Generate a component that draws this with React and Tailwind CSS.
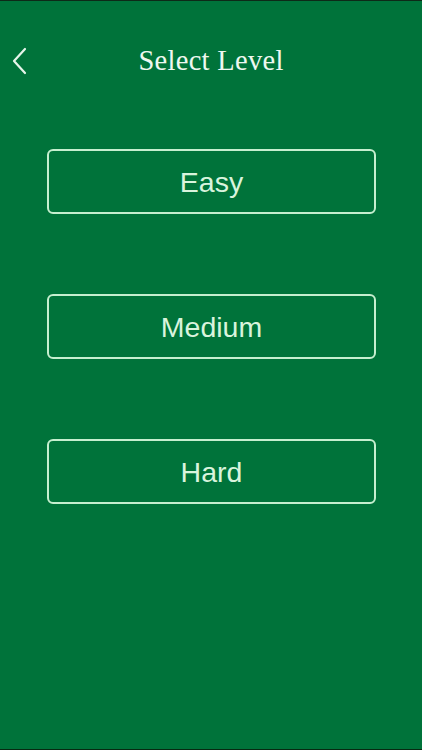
import React from "react";

const levels = ["Easy", "Medium", "Hard"];

export default function App() {
  return (
    <div className="w-[422px] h-[750px] bg-[#00733a] flex flex-col overflow-hidden">
      <div className="h-px bg-[#0d2a18]" />
      {/* Top bar */}
      <div className="relative h-[40px] mt-[40px] flex items-center justify-center">
        <button className="absolute left-[11px] top-[6px] text-[#e6f5ea]">
          <svg width="16" height="28" viewBox="0 0 16 28" fill="none">
            <path d="M14 2 L3 14 L14 26" stroke="currentColor" strokeWidth="2.2" strokeLinecap="round" strokeLinejoin="round" />
          </svg>
        </button>
        <h1 className="text-[28.5px] text-[#eef8f0] font-['Liberation_Serif','DejaVu_Serif',serif] tracking-[0.3px]">
          Select Level
        </h1>
      </div>

      {/* Levels */}
      <div className="flex flex-col gap-[80px] mt-[68px] px-[47px]">
        {levels.map((level) => (
          <button
            key={level}
            className="h-[65px] w-[329px] border-2 border-[#c6efcf] rounded-[6px] flex items-center justify-center pt-[2px] text-[28.5px] text-[#d9f4dd] font-['Liberation_Sans',Arial,sans-serif]"
          >
            {level}
          </button>
        ))}
      </div>
      <div className="mt-auto h-px bg-[#062a12]" />
    </div>
  );
}
